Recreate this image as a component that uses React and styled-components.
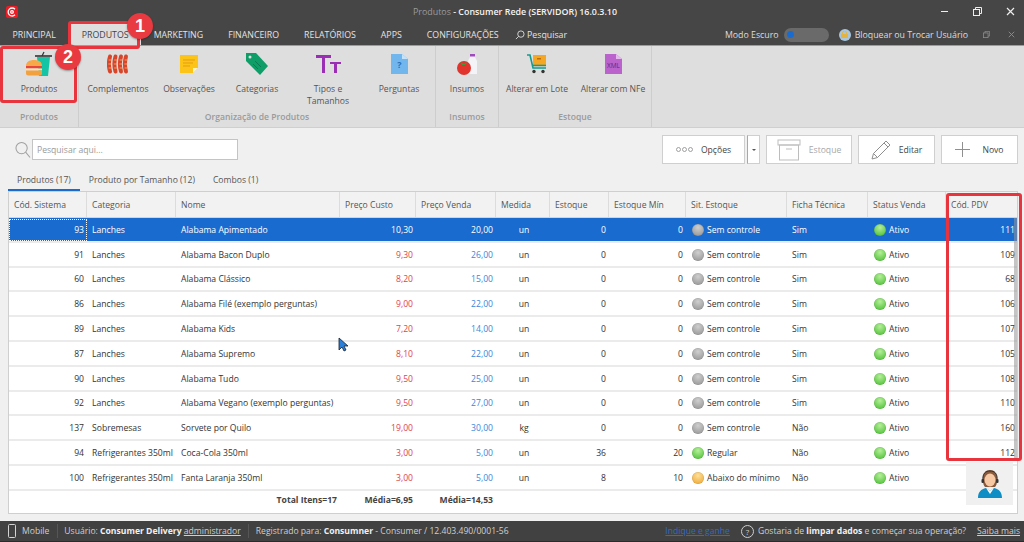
import React from 'react'
import styled, { createGlobalStyle } from 'styled-components'

const GlobalStyle = createGlobalStyle`
  html, body { margin: 0; padding: 0; height: 100%; overflow: hidden; }
  body { font-family: "Open Sans", "Noto Sans", sans-serif; font-size: 8.6px; color: #333; background: #f0f0f0; }
`

const COLUMNS = '78px 89px 164px 76px 80px 54px 59px 77px 101px 81px 78px 72px'

const Page = styled.div`
  position: relative;
  width: 1024px;
  height: 542px;
  display: flex;
  flex-direction: column;
  overflow: hidden;
`

/* barra de titulo */
const TitleBar = styled.div`
  height: 23px;
  background: #464646;
  display: grid;
  grid-template-columns: 1fr auto 1fr;
  align-items: center;
  padding: 0 0 0 6px;
`
const Logo = styled.div`
  width: 12px;
  height: 12px;
  border-radius: 2px;
  background: #ec1c24;
  display: flex;
`
const Title = styled.div`
  color: #9a9a9a;
  font-size: 8.9px;
  b { color: #f4f4f4; font-weight: 600; }
`
const WinControls = styled.div`
  justify-self: end;
  display: flex;
  color: #eee;
  margin-right: -3px;
`
const WinBtn = styled.div`
  width: 33px;
  height: 23px;
  display: flex;
  align-items: center;
  justify-content: center;
`

/* menu */
const MenuBar = styled.div`
  height: 23px;
  background: #464646;
  display: flex;
  align-items: stretch;
  color: #e4e4e4;
  font-size: 8.8px;
`
const MenuItem = styled.div`
  display: flex;
  align-items: center;
  padding: 0 12.5px;
  white-space: nowrap;
  margin-left: ${p => p.$ml || 0}px;
  background: ${p => (p.$active ? '#dedede' : 'transparent')};
  color: ${p => (p.$active ? '#444' : 'inherit')};
`
const MenuRight = styled.div`
  margin-left: auto;
  display: flex;
  align-items: center;
  color: #dcdcdc;
`
const Toggle = styled.div`
  width: 45px;
  height: 14px;
  border-radius: 7px;
  background: #6a6a6a;
  margin: 0 10px 0 5px;
  display: flex;
  align-items: center;
  padding-left: 3px;
  box-sizing: border-box;
  &::before {
    content: '';
    width: 7px;
    height: 7px;
    border-radius: 50%;
    background: #1a6bd0;
  }
`
const LockBadge = styled.div`
  width: 12px;
  height: 12px;
  border-radius: 50%;
  background: #a9c6dc;
  margin-right: 4px;
  display: flex;
  align-items: center;
  justify-content: center;
`
const SmallCtl = styled.div`
  width: 25px;
  display: flex;
  justify-content: center;
  color: #8d8d8d;
  margin-left: ${p => p.$ml || 0}px;
`

/* ribbon */
const Ribbon = styled.div`
  height: 81px;
  background: #dedede;
  display: flex;
  border-bottom: 1px solid #cfcfcf;
  box-shadow: 0 -1px 0 #9c9c9c;
`
const RibbonGroup = styled.div`
  display: flex;
  flex-direction: column;
  border-right: 1px solid #cdcdcd;
`
const GroupItems = styled.div`
  display: flex;
  flex: 1;
`
const GroupLabel = styled.div`
  height: 19px;
  line-height: 19px;
  text-align: center;
  color: #9a9a9a;
  font-weight: 600;
`
const RibbonItem = styled.div`
  width: ${p => p.$w}px;
  display: flex;
  flex-direction: column;
  align-items: center;
  padding-top: 4px;
  color: #555;
  text-align: center;
  line-height: 12px;
`
const IconBox = styled.div`
  height: 28px;
  margin-bottom: 5px;
  display: flex;
  align-items: center;
  justify-content: center;
`

/* conteudo */
const Content = styled.div`
  flex: 1;
  display: flex;
  flex-direction: column;
  padding: 0 6px 7px 8px;
  min-height: 0;
`
const Toolbar = styled.div`
  height: 43px;
  display: flex;
  align-items: center;
  padding-left: 7px;
  box-sizing: border-box;
`
const SearchField = styled.div`
  width: 206px;
  height: 21px;
  margin-left: 1px;
  background: #fff;
  border: 1px solid #c4c4c4;
  box-sizing: border-box;
  padding-left: 4px;
  display: flex;
  align-items: center;
  color: #9a9a9a;
`
const ToolButtons = styled.div`
  margin-left: auto;
  display: flex;
  gap: 6px;
`
const ToolButton = styled.div`
  width: ${p => p.$w}px;
  height: 29px;
  background: #fff;
  border: 1px solid #cfcfcf;
  box-sizing: border-box;
  display: flex;
  align-items: center;
  justify-content: center;
  gap: ${p => p.$gap || 8}px;
  color: ${p => (p.$off ? '#a8a8a8' : '#444')};
`
const SplitArrow = styled.div`
  width: 13px;
  height: 29px;
  margin-left: -4px;
  background: #fff;
  border: 1px solid #cfcfcf;
  border-left-color: #a8a8a8;
  box-sizing: border-box;
  display: flex;
  align-items: center;
  justify-content: center;
  &::before {
    content: '';
    border: 2.5px solid transparent;
    border-top-color: #555;
    border-bottom-width: 0;
  }
`
const Tabs = styled.div`
  display: flex;
  height: 20px;
`
const Tab = styled.div`
  padding: 0 9px;
  display: flex;
  align-items: center;
  color: #555;
  box-sizing: border-box;
  border-bottom: 2px solid ${p => (p.$active ? '#1a6bd0' : 'transparent')};
`
const Grid = styled.div`
  position: relative;
  flex: 1;
  background: #fff;
  border: 1px solid #cfcfcf;
  display: flex;
  flex-direction: column;
  overflow: hidden;
`
const HeadRow = styled.div`
  display: grid;
  grid-template-columns: ${COLUMNS};
  height: 26px;
  background: #f2f2f2;
  border-bottom: 1px solid #d4d4d4;
  box-sizing: border-box;
`
const HeadCell = styled.div`
  display: flex;
  align-items: center;
  padding-left: 5px;
  color: #555;
  border-right: 1px solid #dcdcdc;
`
const Row = styled.div`
  display: grid;
  grid-template-columns: ${COLUMNS};
  height: 24.8px;
  padding-top: 1px;
  box-sizing: border-box;
  border-bottom: 2px solid #ebebeb;
  background: ${p => (p.$selected ? '#1a6bd0' : '#fff')};
  color: ${p => (p.$selected ? '#fff' : '#333')};
`
const Cell = styled.div`
  display: flex;
  align-items: center;
  min-width: 0;
  white-space: nowrap;
  padding: 0 3px 0 ${p => p.$pl || 5}px;
  gap: 3px;
  justify-content: ${p => (p.$align === 'right' ? 'flex-end' : p.$align === 'center' ? 'center' : 'flex-start')};
  color: ${p => p.$color || 'inherit'};
  outline: ${p => (p.$focus ? '1px dotted #fff' : 'none')};
  outline-offset: -1px;
`
const Dot = styled.span`
  width: 12px;
  height: 12px;
  border-radius: 50%;
  flex: none;
  background: radial-gradient(circle at 50% 30%, ${p => p.$light} 0%, ${p => p.$base} 80%);
  box-shadow: inset 0 0 0 0.5px rgba(0, 0, 0, 0.12);
`
const Totals = styled.div`
  flex: 1;
  display: grid;
  grid-template-columns: ${COLUMNS};
  align-items: center;
  font-weight: 700;
  color: #444;
  padding-bottom: 3px;
`
const TotalCell = styled.div`
  grid-column: ${p => p.$col};
  text-align: right;
  padding-right: 3px;
`
const ScrollStrip = styled.div`
  position: absolute;
  top: 26px;
  right: 0;
  width: 3px;
  height: 242px;
  background: rgba(150, 150, 150, 0.55);
`

/* barra de status */
const StatusBar = styled.div`
  height: 21px;
  background: #414141;
  border-bottom: 1px solid #2e2a2a;
  box-sizing: border-box;
  display: flex;
  align-items: center;
  color: #cfcfcf;
  padding-left: 8px;
  white-space: nowrap;
  b { color: #f0f0f0; font-weight: 700; }
  u { text-underline-offset: 1px; }
`
const StatusPart = styled.div`
  display: flex;
  align-items: center;
  gap: ${p => p.$gap || 0}px;
  padding-right: ${p => p.$pr}px;
  margin-right: ${p => p.$mr}px;
  border-right: 1px solid #565656;
  height: 14px;
`
const StatusRight = styled.div`
  margin-left: auto;
  display: flex;
  align-items: center;
  padding-right: 4px;
`
const Invite = styled.u`
  color: #2f6cc0;
  margin-right: 11px;
`
const HelpCircle = styled.span`
  width: 11px;
  height: 11px;
  border: 1px solid #cfcfcf;
  border-radius: 50%;
  display: flex;
  align-items: center;
  justify-content: center;
  font-size: 8px;
  margin-right: 4px;
`
const SaibaMais = styled.u`
  margin-left: 11px;
`

/* anotacoes por cima da tela */
const RedBox = styled.div`
  position: absolute;
  left: ${p => p.$x}px;
  top: ${p => p.$y}px;
  width: ${p => p.$w}px;
  height: ${p => p.$h}px;
  border: 3px solid #e8343c;
  border-radius: 3px;
  box-sizing: border-box;
`
const Badge = styled.div`
  position: absolute;
  left: ${p => p.$x}px;
  top: ${p => p.$y}px;
  width: 26px;
  height: 26px;
  border-radius: 50%;
  background: #e83a40;
  color: #fff;
  font-family: "Liberation Sans", sans-serif;
  font-size: 18px;
  font-weight: 700;
  display: flex;
  align-items: center;
  justify-content: center;
  box-shadow: 0 1px 2px rgba(0, 0, 0, 0.35);
`
const Attendant = styled.div`
  position: absolute;
  left: 966px;
  top: 462px;
  width: 47px;
  height: 43px;
  background: #f0f0f0;
  display: flex;
  align-items: center;
  justify-content: center;
`
const Cursor = styled.svg`
  position: absolute;
  left: 338px;
  top: 337px;
`

const HEADERS = ['Cód. Sistema', 'Categoria', 'Nome', 'Preço Custo', 'Preço Venda', 'Medida', 'Estoque', 'Estoque Mín', 'Sit. Estoque', 'Ficha Técnica', 'Status Venda', 'Cód. PDV']

const SEM = 'Sem controle'
const ROWS = [
  [93, 'Lanches', 'Alabama Apimentado', '10,30', '20,00', 'un', 0, 0, SEM, 'Sim', 111],
  [91, 'Lanches', 'Alabama Bacon Duplo', '9,30', '26,00', 'un', 0, 0, SEM, 'Sim', 109],
  [60, 'Lanches', 'Alabama Clássico', '8,20', '15,00', 'un', 0, 0, SEM, 'Sim', 68],
  [86, 'Lanches', 'Alabama Filé (exemplo perguntas)', '9,00', '22,00', 'un', 0, 0, SEM, 'Sim', 106],
  [89, 'Lanches', 'Alabama Kids', '7,20', '14,00', 'un', 0, 0, SEM, 'Sim', 107],
  [87, 'Lanches', 'Alabama Supremo', '8,10', '22,00', 'un', 0, 0, SEM, 'Sim', 105],
  [90, 'Lanches', 'Alabama Tudo', '9,50', '25,00', 'un', 0, 0, SEM, 'Sim', 108],
  [92, 'Lanches', 'Alabama Vegano (exemplo perguntas)', '9,50', '27,00', 'un', 0, 0, SEM, 'Sim', 110],
  [137, 'Sobremesas', 'Sorvete por Quilo', '19,00', '30,00', 'kg', 0, 0, SEM, 'Não', 160],
  [94, 'Refrigerantes 350ml', 'Coca-Cola 350ml', '3,00', '5,00', 'un', 36, 20, 'Regular', 'Não', 112],
  [100, 'Refrigerantes 350ml', 'Fanta Laranja 350ml', '3,00', '5,00', 'un', 8, 10, 'Abaixo do mínimo', 'Não', ''],
]

const DOTS = {
  [SEM]: ['#cfcfcf', '#9b9b9b'],
  Regular: ['#b6f09a', '#56c43e'],
  'Abaixo do mínimo': ['#fde09a', '#f0ad3c'],
}

const ProductsIcon = () => (
  <svg width="26" height="26" viewBox="0 0 26 26">
    <path d="M16 5l2-4" stroke="#333" strokeWidth="1.200" fill="none" />
    <path d="M9 5h17" stroke="#333" strokeWidth="1.600" />
    <path d="M11 6h13l-2 19H13z" fill="#14c4a4" />
    <path d="M0 15c0-4 3-6 8-6s8 2 8 6z" fill="#f7a94a" />
    <rect y="15" width="16" height="2.500" fill="#e8463c" />
    <rect y="17.500" width="16" height="2" fill="#fbe3b0" />
    <path d="M0 19.500h16v3c0 1-1 2-2 2H2c-1 0-2-1-2-2z" fill="#f3a03f" />
  </svg>
)
const SausageIcon = () => (
  <svg width="22" height="20" viewBox="0 0 22 20" fill="none" strokeLinecap="round">
    {[3, 8.500, 14, 19].map((x, i) => (
      <g key={i}>
        <path d={`M${x} 2.500c-1.500 5-1.500 10 0 15`} stroke="#d9452b" strokeWidth="4" />
        <path d={`M${x - 1} 6h2M${x - 1.300} 10h2M${x - 1} 14h2`} stroke="#f6b26b" strokeWidth="0.800" />
      </g>
    ))}
  </svg>
)
const NoteIcon = () => (
  <svg width="20" height="20" viewBox="0 0 20 20">
    <path d="M1 1h18v13l-5 5H1z" fill="#fcc419" />
    <path d="M4 6h12M4 9h10M4 12h7" stroke="#e59c10" strokeWidth="1" />
    <path d="M19 14h-5v5z" fill="#fff3c4" />
  </svg>
)
const TagIcon = () => (
  <svg width="24" height="24" viewBox="0 0 24 24">
    <path d="M1 1h10l12 13-8 9L1 9z" fill="#0f9d68" />
    <circle cx="5" cy="5" r="1.500" fill="#dedede" />
    <path d="M10 9l6 6M8 12l5 5" stroke="#0a7a50" strokeWidth="1" />
  </svg>
)
const TextSizeIcon = () => (
  <svg width="25" height="20" viewBox="0 0 25 20" fill="#9a2fb5">
    <path d="M0 1h15v3H9v15H6V4H0z" />
    <path d="M14 8h11v2h-4v9h-3v-9h-4z" />
  </svg>
)
const QuestionDocIcon = () => (
  <svg width="17" height="22" viewBox="0 0 17 22">
    <path d="M0 1h11l6 5v15H0z" fill="#72b6ee" />
    <path d="M11 1l6 5h-6z" fill="#c4e2fa" />
    <text x="8.500" y="15" fontSize="9" fontWeight="700" fontFamily="Open Sans" fill="#2b6fb5" textAnchor="middle">?</text>
  </svg>
)
const InsumosIcon = () => (
  <svg width="20" height="21" viewBox="0 0 20 21">
    <path d="M13 0h5v3l2 4v13h-9V7l2-4z" fill="#f4f4f8" />
    <rect x="13" y="0" width="5" height="2.500" fill="#a04ac0" />
    <circle cx="7" cy="14" r="7" fill="#e0342c" />
    <path d="M3 8l4 2 4-2-3 3H5z" fill="#3b9a3c" />
  </svg>
)
const CartIcon = () => (
  <svg width="20" height="20" viewBox="0 0 20 20">
    <rect x="6" y="1" width="13" height="10" fill="#f5a623" />
    <rect x="10" y="4" width="4" height="1.500" fill="#b96f0c" />
    <path d="M0 1h3l3 13h13" stroke="#149a8e" strokeWidth="1.600" fill="none" />
    <path d="M5 11.500h14" stroke="#149a8e" strokeWidth="1.600" />
    <circle cx="7" cy="17.500" r="1.700" fill="#333" />
    <circle cx="16" cy="17.500" r="1.700" fill="#333" />
  </svg>
)
const XmlIcon = () => (
  <svg width="17" height="22" viewBox="0 0 17 22">
    <path d="M0 1h11l6 5v15H0z" fill="#bb62cd" />
    <path d="M11 1l6 5h-6z" fill="#e4b9ed" />
    <text x="8.500" y="15" fontSize="6.500" fontFamily="Open Sans" fill="#5b2a78" textAnchor="middle">XML</text>
  </svg>
)
const MagnifierSmall = () => (
  <svg width="10" height="10" viewBox="0 0 11 11" fill="none" stroke="#ddd" strokeWidth="1">
    <circle cx="6.500" cy="4.500" r="3.500" />
    <path d="M4 7L1 10" />
  </svg>
)
const Magnifier = () => (
  <svg width="16" height="18" viewBox="0 0 17 18" fill="none" stroke="#a0a0a0" strokeWidth="1.100">
    <circle cx="7" cy="7" r="6" />
    <path d="M11.500 11.500L16 17" />
  </svg>
)
const Restore = ({ size = 9 }) => (
  <svg width={size} height={size} viewBox="0 0 9 9" fill="none" stroke="currentColor" strokeWidth="1">
    <rect x="0.500" y="2.500" width="6" height="6" />
    <path d="M2.500 2.500v-2h6v6h-2" />
  </svg>
)
const CloseX = ({ size = 9 }) => (
  <svg width={size} height={size} viewBox="0 0 9 9" stroke="currentColor" strokeWidth="1.200">
    <path d="M1 1l7 7M8 1L1 8" />
  </svg>
)
const ArchiveIcon = () => (
  <svg width="24" height="24" viewBox="0 0 24 24" fill="none" stroke="#bdbdbd" strokeWidth="1">
    <rect x="1" y="2" width="22" height="5" />
    <rect x="2.500" y="7" width="19" height="15" />
    <path d="M9 11h6" />
  </svg>
)
const PencilIcon = () => (
  <svg width="20" height="20" viewBox="0 0 20 20" fill="none" stroke="#8f8f8f" strokeWidth="1">
    <path d="M1 19l1.500-5.500L15 1l4 4L6.500 17.500z" />
    <path d="M2.500 13.500l4 4M13 3l4 4" />
  </svg>
)
const PlusIcon = () => (
  <svg width="15" height="15" viewBox="0 0 15 15" stroke="#8f8f8f" strokeWidth="1">
    <path d="M7.500 0v15M0 7.500h15" />
  </svg>
)
const PhoneIcon = () => (
  <svg width="8" height="14" viewBox="0 0 8 14" fill="none" stroke="#d4d4d4" strokeWidth="1">
    <rect x="0.500" y="0.500" width="7" height="13" rx="1" />
  </svg>
)
const AttendantIcon = () => (
  <svg width="26" height="29" viewBox="0 0 26 29">
    <path d="M6 12C5 4 9 1 13 1s8 3 7 11c0 3-1 5-2 6H8c-1-1-2-3-2-6z" fill="#8a5a3c" />
    <ellipse cx="13" cy="11" rx="5.500" ry="6.500" fill="#f6c9a4" />
    <path d="M6 12C5 4 9 2 13 2s8 2 7 10" fill="none" stroke="#333" strokeWidth="1" />
    <rect x="19" y="10" width="2.500" height="4" rx="1" fill="#333" />
    <rect x="4.500" y="10" width="2.500" height="4" rx="1" fill="#333" />
    <path d="M1 29c0-6 3-9 8-10l4 3 4-3c5 1 8 4 8 10z" fill="#0f8ec6" />
    <path d="M9 19l4 6 4-6-4 3z" fill="#fff" />
  </svg>
)

const RIBBON = [
  { label: 'Produtos', items: [{ w: 78, t: 'Produtos', i: <ProductsIcon /> }] },
  {
    label: 'Organização de Produtos',
    items: [
      { w: 78, t: 'Complementos', i: <SausageIcon /> },
      { w: 64, t: 'Observações', i: <NoteIcon /> },
      { w: 72, t: 'Categorias', i: <TagIcon /> },
      { w: 70, t: <>Tipos e<br />Tamanhos</>, i: <TextSizeIcon /> },
      { w: 72, t: 'Perguntas', i: <QuestionDocIcon /> },
    ],
  },
  { label: 'Insumos', items: [{ w: 62, t: 'Insumos', i: <InsumosIcon /> }] },
  {
    label: 'Estoque',
    items: [
      { w: 76, t: 'Alterar em Lote', i: <CartIcon /> },
      { w: 76, t: 'Alterar com NFe', i: <XmlIcon /> },
    ],
  },
]

export default function App() {
  return (
    <Page>
      <GlobalStyle />
      <TitleBar>
        <Logo>
          <svg width="12" height="12" viewBox="0 0 12 12" fill="none" stroke="#fff" strokeWidth="1.300">
            <path d="M9 3.200A4 4 0 1 0 9 8.800" />
            <circle cx="6" cy="6" r="1.300" />
          </svg>
        </Logo>
        <Title>Produtos <b>- Consumer Rede (SERVIDOR) 16.0.3.10</b></Title>
        <WinControls>
          <WinBtn><svg width="7" height="1"><rect width="7" height="1" fill="#eee" /></svg></WinBtn>
          <WinBtn><Restore /></WinBtn>
          <WinBtn><CloseX /></WinBtn>
        </WinControls>
      </TitleBar>

      <MenuBar>
        <MenuItem>PRINCIPAL</MenuItem>
        <MenuItem $active $ml={1}>PRODUTOS</MenuItem>
        <MenuItem>MARKETING</MenuItem>
        <MenuItem>FINANCEIRO</MenuItem>
        <MenuItem>RELATÓRIOS</MenuItem>
        <MenuItem>APPS</MenuItem>
        <MenuItem>CONFIGURAÇÕES</MenuItem>
        <MenuItem $ml={-9}><MagnifierSmall />&nbsp;Pesquisar</MenuItem>
        <MenuRight>
          Modo Escuro
          <Toggle />
          <LockBadge>
            <svg width="7" height="7" viewBox="0 0 7 7"><rect y="3" width="7" height="4" fill="#e5b340" /><path d="M1.500 3V2a2 2 0 0 1 4 0v1" fill="none" stroke="#e5b340" /></svg>
          </LockBadge>
          Bloquear ou Trocar Usuário
          <SmallCtl $ml={6}><Restore size={7} /></SmallCtl>
          <SmallCtl><CloseX size={7} /></SmallCtl>
        </MenuRight>
      </MenuBar>

      <Ribbon>
        {RIBBON.map(g => (
          <RibbonGroup key={g.label}>
            <GroupItems>
              {g.items.map((it, i) => (
                <RibbonItem key={i} $w={it.w}>
                  <IconBox>{it.i}</IconBox>
                  <span>{it.t}</span>
                </RibbonItem>
              ))}
            </GroupItems>
            <GroupLabel>{g.label}</GroupLabel>
          </RibbonGroup>
        ))}
      </Ribbon>

      <Content>
        <Toolbar>
          <Magnifier />
          <SearchField>Pesquisar aqui...</SearchField>
          <ToolButtons>
            <ToolButton $w={83}>
              <svg width="17" height="5" viewBox="0 0 17 5" fill="none" stroke="#8a8a8a" strokeWidth="0.800">
                <circle cx="2.500" cy="2.500" r="2" /><circle cx="8.500" cy="2.500" r="2" /><circle cx="14.500" cy="2.500" r="2" />
              </svg>
              Opções
            </ToolButton>
            <SplitArrow />
            <ToolButton $w={86} $off><ArchiveIcon />Estoque</ToolButton>
            <ToolButton $w={77}><PencilIcon />Editar</ToolButton>
            <ToolButton $w={77} $gap={12}><PlusIcon />Novo</ToolButton>
          </ToolButtons>
        </Toolbar>
        <Tabs>
          <Tab $active>Produtos (17)</Tab>
          <Tab>Produto por Tamanho (12)</Tab>
          <Tab>Combos (1)</Tab>
        </Tabs>
        <Grid>
          <HeadRow>
            {HEADERS.map(h => <HeadCell key={h}>{h}</HeadCell>)}
          </HeadRow>
          {ROWS.map((r, idx) => {
            const sel = idx === 0
            const dot = DOTS[r[8]]
            return (
              <Row key={r[0]} $selected={sel}>
                <Cell $align="right" $focus={sel}>{r[0]}</Cell>
                <Cell>{r[1]}</Cell>
                <Cell>{r[2]}</Cell>
                <Cell $align="right" $color={sel ? '#fff' : '#e0434b'}>{r[3]}</Cell>
                <Cell $align="right" $color={sel ? '#fff' : '#3c86d8'}>{r[4]}</Cell>
                <Cell $align="center">{r[5]}</Cell>
                <Cell $align="right">{r[6]}</Cell>
                <Cell $align="right">{r[7]}</Cell>
                <Cell $pl={6}><Dot $light={dot[0]} $base={dot[1]} />{r[8]}</Cell>
                <Cell>{r[9]}</Cell>
                <Cell $pl={6}><Dot $light="#b6f09a" $base="#56c43e" />Ativo</Cell>
                <Cell $align="right">{r[10]}</Cell>
              </Row>
            )
          })}
          <Totals>
            <TotalCell $col="3">Total Itens=17</TotalCell>
            <TotalCell $col="4">Média=6,95</TotalCell>
            <TotalCell $col="5">Média=14,53</TotalCell>
          </Totals>
          <ScrollStrip />
        </Grid>
      </Content>

      <StatusBar>
        <StatusPart $gap={6} $pr={8} $mr={6}><PhoneIcon />Mobile</StatusPart>
        <StatusPart $pr={7} $mr={7}><span>Usuário: <b>Consumer Delivery</b> <u>administrador</u></span></StatusPart>
        <span>Registrado para: <b>Consumner</b> - Consumer / 12.403.490/0001-56</span>
        <StatusRight>
          <Invite>Indique e ganhe</Invite>
          <HelpCircle>?</HelpCircle>
          <span>Gostaria de <b>limpar dados</b> e começar sua operação?</span>
          <SaibaMais>Saiba mais</SaibaMais>
        </StatusRight>
      </StatusBar>

      <Attendant><AttendantIcon /></Attendant>
      <RedBox $x={68} $y={21} $w={72} $h={28} />
      <RedBox $x={0} $y={46} $w={77} $h={57} />
      <RedBox $x={946} $y={193} $w={76} $h={268} />
      <Badge $x={127} $y={13}>1</Badge>
      <Badge $x={55} $y={44}>2</Badge>
      <Cursor width="12" height="16" viewBox="0 0 12 16">
        <path d="M1 1v12l3-3 2 4 2-1-2-4h4z" fill="#2b7fd8" stroke="#123" strokeWidth="0.800" />
      </Cursor>
    </Page>
  )
}
